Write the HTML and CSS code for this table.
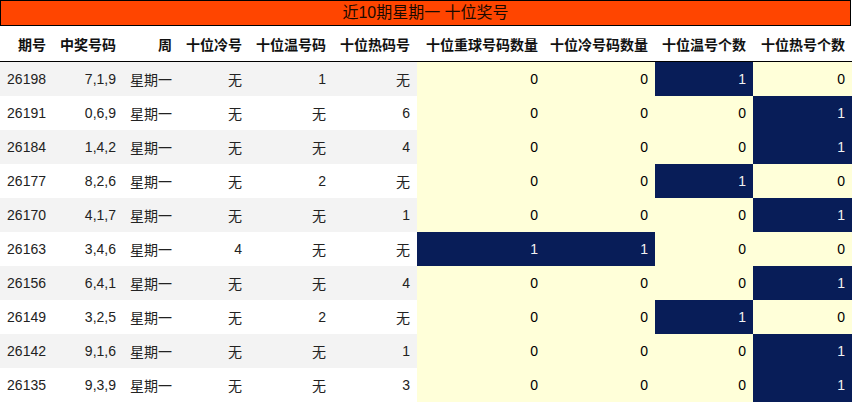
FILE: index.html
```html
<!DOCTYPE html>
<html lang="zh">
<head>
<meta charset="utf-8">
<title>近10期星期一 十位奖号</title>
<link rel="stylesheet" href="styles.css">
</head>
<body>
<div class="title">近10期星期一 十位奖号</div>
<table class="grid">
<colgroup>
<col class="c1"><col class="c2"><col class="c3"><col class="c4"><col class="c5"><col class="c6"><col class="c7"><col class="c8"><col class="c9"><col class="c10">
</colgroup>
<thead>
<tr><th>期号</th><th>中奖号码</th><th>周</th><th>十位冷号</th><th>十位温号码</th><th>十位热码号</th><th>十位重球号码数量</th><th>十位冷号码数量</th><th>十位温号个数</th><th>十位热号个数</th></tr>
</thead>
<tbody>
<tr><td>26198</td><td>7,1,9</td><td>星期一</td><td>无</td><td>1</td><td>无</td><td class="lo">0</td><td class="lo">0</td><td class="hi">1</td><td class="lo">0</td></tr>
<tr><td>26191</td><td>0,6,9</td><td>星期一</td><td>无</td><td>无</td><td>6</td><td class="lo">0</td><td class="lo">0</td><td class="lo">0</td><td class="hi">1</td></tr>
<tr><td>26184</td><td>1,4,2</td><td>星期一</td><td>无</td><td>无</td><td>4</td><td class="lo">0</td><td class="lo">0</td><td class="lo">0</td><td class="hi">1</td></tr>
<tr><td>26177</td><td>8,2,6</td><td>星期一</td><td>无</td><td>2</td><td>无</td><td class="lo">0</td><td class="lo">0</td><td class="hi">1</td><td class="lo">0</td></tr>
<tr><td>26170</td><td>4,1,7</td><td>星期一</td><td>无</td><td>无</td><td>1</td><td class="lo">0</td><td class="lo">0</td><td class="lo">0</td><td class="hi">1</td></tr>
<tr><td>26163</td><td>3,4,6</td><td>星期一</td><td>4</td><td>无</td><td>无</td><td class="hi">1</td><td class="hi">1</td><td class="lo">0</td><td class="lo">0</td></tr>
<tr><td>26156</td><td>6,4,1</td><td>星期一</td><td>无</td><td>无</td><td>4</td><td class="lo">0</td><td class="lo">0</td><td class="lo">0</td><td class="hi">1</td></tr>
<tr><td>26149</td><td>3,2,5</td><td>星期一</td><td>无</td><td>2</td><td>无</td><td class="lo">0</td><td class="lo">0</td><td class="hi">1</td><td class="lo">0</td></tr>
<tr><td>26142</td><td>9,1,6</td><td>星期一</td><td>无</td><td>无</td><td>1</td><td class="lo">0</td><td class="lo">0</td><td class="lo">0</td><td class="hi">1</td></tr>
<tr><td>26135</td><td>9,3,9</td><td>星期一</td><td>无</td><td>无</td><td>3</td><td class="lo">0</td><td class="lo">0</td><td class="lo">0</td><td class="hi">1</td></tr>
</tbody>
</table>
</body>
</html>
```
FILE: styles.css
```css
html, body {
  margin: 0;
  padding: 0;
  background: #ffffff;
}
body {
  font-family: "Liberation Sans", "Noto Sans CJK SC", sans-serif;
  color: #222222;
  width: 852px;
}
.title {
  box-sizing: border-box;
  width: 851px;
  height: 26px;
  border: 1px solid #000000;
  background: #ff4500;
  color: #1a0a00;
  font-size: 16px;
  line-height: 24px;
  text-align: center;
}
.grid {
  border-collapse: collapse;
  border-spacing: 0;
  table-layout: fixed;
  width: 852px;
  font-size: 14px;
}
.c1 { width: 53px; }
.c2 { width: 70px; }
.c3 { width: 56px; }
.c4 { width: 70px; }
.c5 { width: 84px; }
.c6 { width: 84px; }
.c7 { width: 128px; }
.c8 { width: 110px; }
.c9 { width: 98px; }
.c10 { width: 99px; }
.grid th {
  height: 35px;
  padding: 0 7px 0 0;
  text-align: right;
  font-weight: bold;
  color: #111111;
  border-bottom: 1px solid #000000;
  white-space: nowrap;
  vertical-align: middle;
}
.grid td {
  height: 34px;
  padding: 0 7px 0 0;
  text-align: right;
  vertical-align: middle;
  white-space: nowrap;
}
.grid tbody tr:nth-child(odd) td {
  background: #f3f3f3;
}
.grid tbody tr:nth-child(even) td {
  background: #ffffff;
}
.grid tbody tr td.lo {
  background: #ffffd9;
  color: #000000;
}
.grid tbody tr td.hi {
  background: #081d58;
  color: #f1f1f1;
}
```
